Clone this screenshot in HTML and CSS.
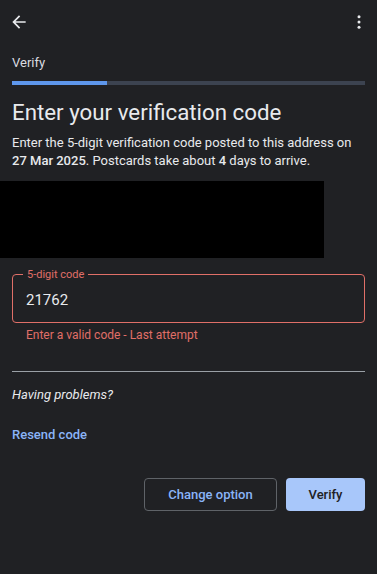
FILE: index.html
```html
<!DOCTYPE html>
<html lang="en">
<head>
    <meta charset="UTF-8">
    <meta name="viewport" content="width=device-width, initial-scale=1.0">
    <title>Verify</title>
    <link rel="stylesheet" href="styles.css">
</head>
<body>

    <div class="topbar">
        <svg class="icon" width="20" height="20" viewBox="0 0 24 24">
            <path d="M20 11H7.83l5.59-5.59L12 4l-8 8 8 8 1.41-1.41L7.83 13H20v-2z" fill="#e8eaed"/>
        </svg>
        <svg class="icon" width="18" height="18" viewBox="0 0 24 24">
            <circle cx="12" cy="5" r="2" fill="#e8eaed"/>
            <circle cx="12" cy="12" r="2" fill="#e8eaed"/>
            <circle cx="12" cy="19" r="2" fill="#e8eaed"/>
        </svg>
    </div>

    <div class="container">
        <div class="step">Verify</div>
        <div class="progress"><div class="progress-fill" style="width: 27%"></div></div>

        <h1>Enter your verification code</h1>
        <p class="intro">Enter the 5-digit verification code posted to this address on <b>27 Mar 2025</b>. Postcards take about <b>4</b> days to arrive.</p>

        <div class="address"></div>

        <div class="field">
            <span class="field-label">5-digit code</span>
            <div class="field-value">21762</div>
        </div>
        <div class="error">Enter a valid code - Last attempt</div>

        <hr class="divider">

        <div class="problems">Having problems?</div>
        <a class="resend" href="#">Resend code</a>

        <div class="actions">
            <button class="btn-outline">Change option</button>
            <button class="btn-filled">Verify</button>
        </div>
    </div>

</body>
</html>
```

FILE: styles.css
```css
html, body {
    margin: 0;
    padding: 0;
    height: 100%;
    background-color: #202124;
    color: #e8eaed;
    font-family: Roboto, 'Noto Sans', sans-serif;
}
.topbar {
    height: 44px;
    padding: 0 9px 0 9px;
    display: flex;
    align-items: center;
    justify-content: space-between;
}
.icon {
    display: block;
}
.container {
    padding: 0 12px;
}
.step {
    font-size: 13px;
    font-weight: 400;
    color: #dadce0;
    margin-top: 11px;
    line-height: 16px;
}
.progress {
    height: 4px;
    background-color: #3c4350;
    margin-top: 10px;
}
.progress-fill {
    height: 100%;
    background-color: #5e97ec;
}
h1 {
    font-size: 22.3px;
    font-weight: 400;
    margin: 13px 0 0;
    line-height: 28px;
    color: #e8eaed;
}
.intro {
    font-size: 13px;
    line-height: 18px;
    margin: 8px 0 0;
    color: #e8eaed;
}
.intro b {
    font-weight: 500;
}
.address {
    background-color: #000;
    height: 77px;
    width: 324px;
    margin-left: -12px;
    margin-top: 11px;
}
.field {
    position: relative;
    margin-top: 16px;
    height: 47px;
    border: 1px solid #e06f68;
    border-radius: 4px;
    padding: 0 13px;
    display: flex;
    align-items: center;
}
.field-label {
    position: absolute;
    top: -7px;
    left: 10px;
    padding: 0 4px;
    font-size: 11px;
    line-height: 13px;
    color: #e06f68;
    background-color: #202124;
}
.field-value {
    font-size: 15px;
    color: #e8eaed;
    padding-top: 2px;
}
.error {
    font-size: 12px;
    color: #e06f68;
    padding-left: 14px;
    margin-top: 4px;
    line-height: 16px;
}
.divider {
    border: none;
    border-top: 1.5px solid #9aa0a6;
    margin: 28px 0 0;
}
.problems {
    font-size: 13px;
    font-style: italic;
    color: #e8eaed;
    margin-top: 15px;
    line-height: 16px;
}
.resend {
    display: block;
    font-size: 13px;
    font-weight: 500;
    color: #8ab4f8;
    text-decoration: none;
    margin-top: 24px;
    line-height: 16px;
}
.actions {
    display: flex;
    justify-content: flex-end;
    gap: 9px;
    margin-top: 35px;
}
button {
    height: 33px;
    font-family: Roboto, 'Noto Sans', sans-serif;
    font-size: 13px;
    font-weight: 500;
    border-radius: 4px;
    cursor: pointer;
}
.btn-outline {
    width: 133px;
    background-color: transparent;
    border: 1px solid #5f6368;
    color: #8ab4f8;
}
.btn-filled {
    width: 79px;
    background-color: #a8c7fa;
    border: none;
    color: #202124;
}
```
